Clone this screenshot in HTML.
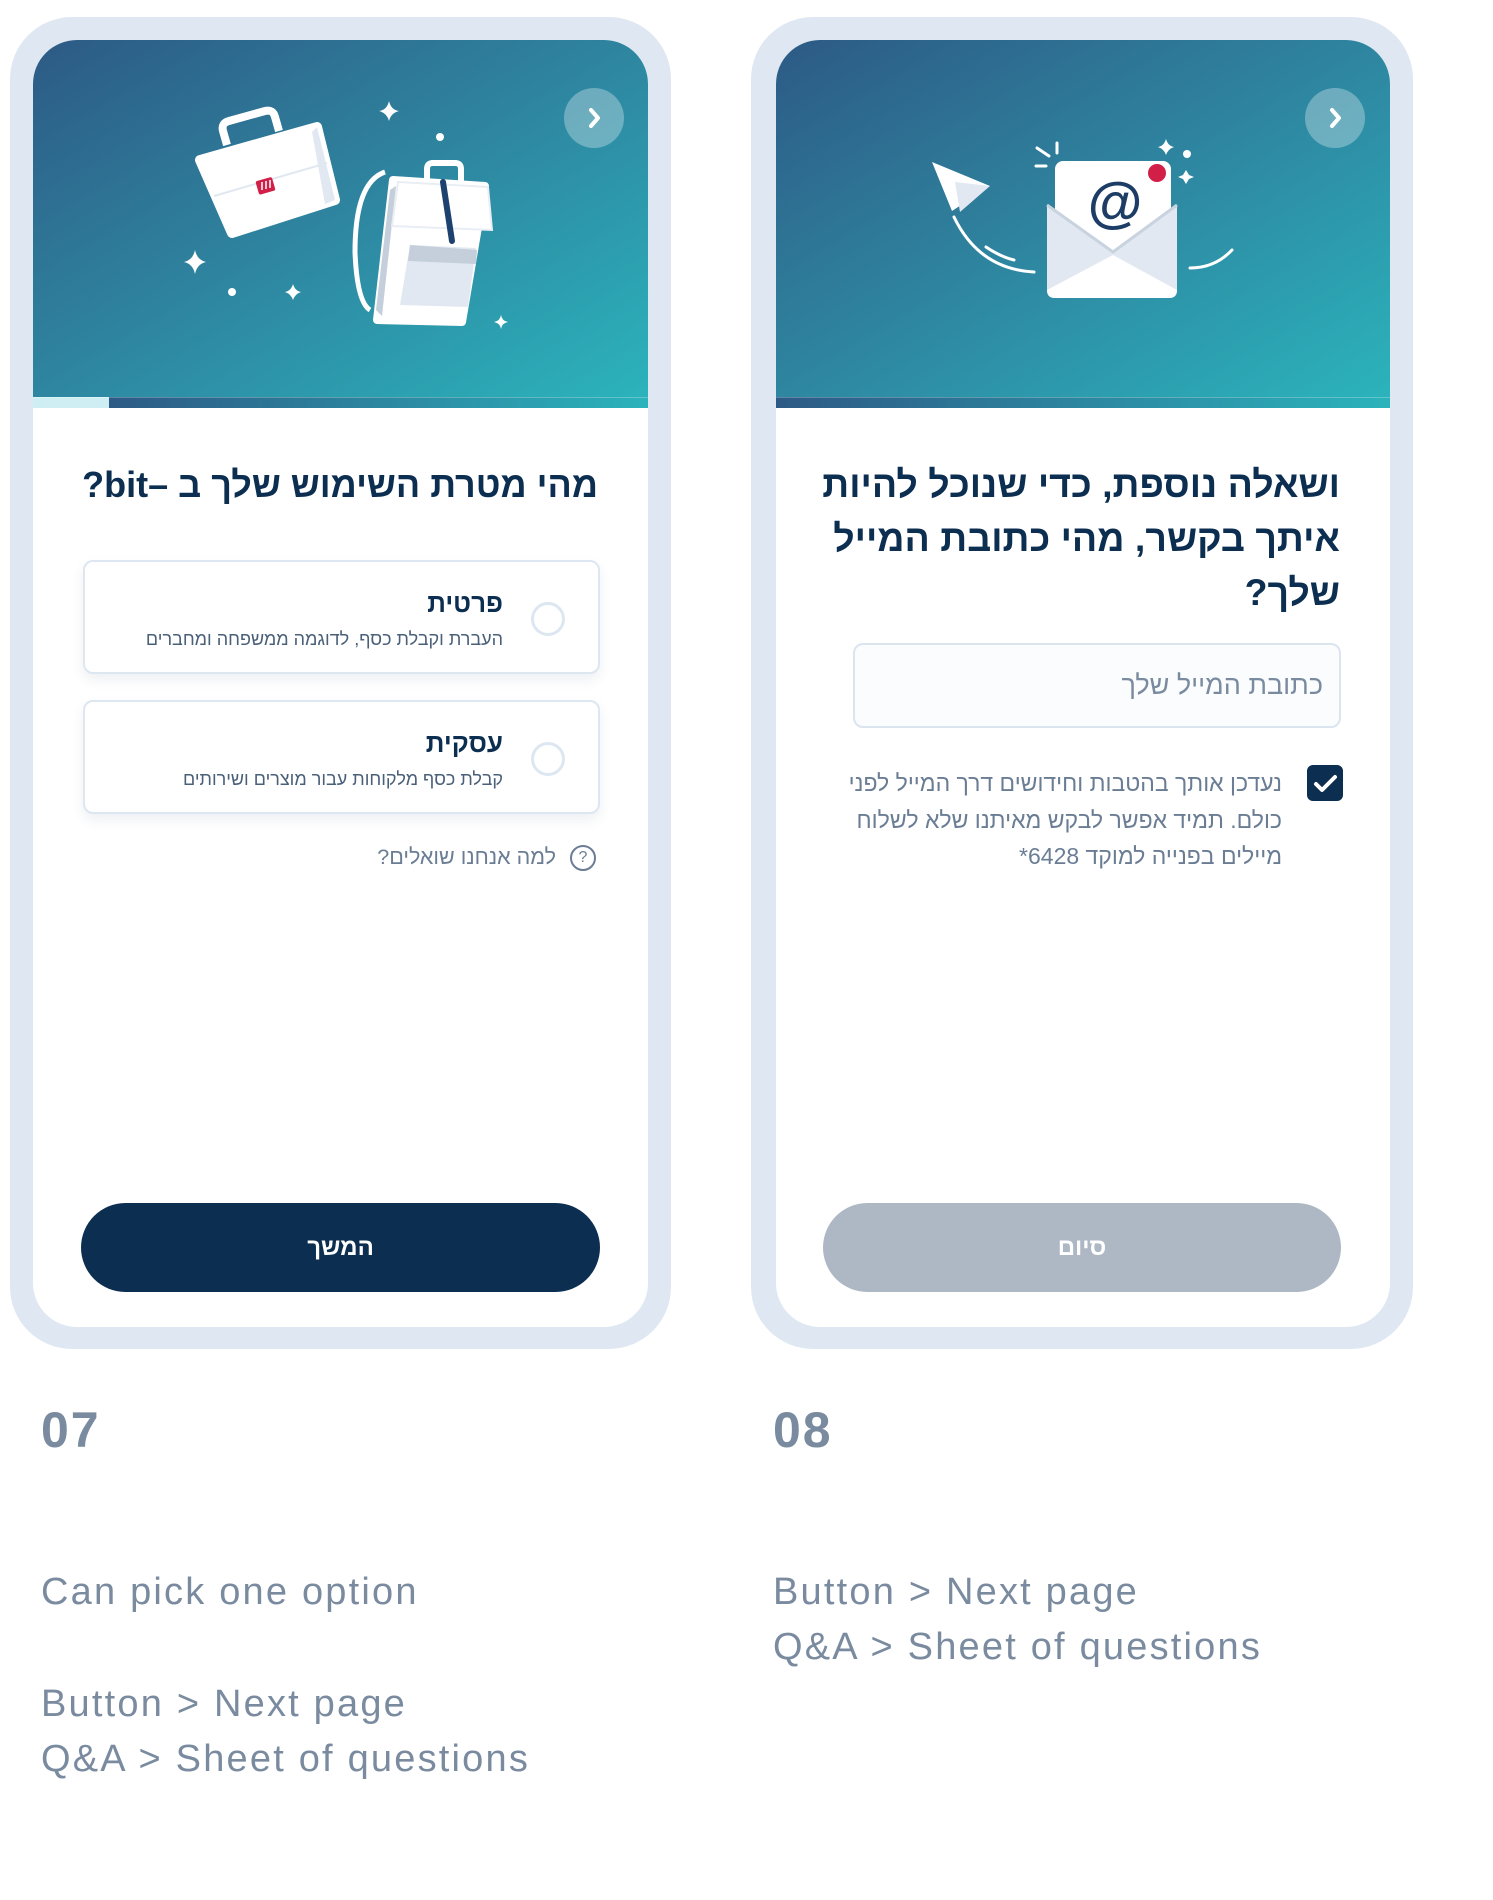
<!DOCTYPE html>
<html><head><meta charset="utf-8"><style>
*{margin:0;padding:0;box-sizing:border-box}
body{width:1493px;height:1900px;background:#fff;position:relative;overflow:hidden;font-family:"Liberation Sans","Noto Sans CJK SC",sans-serif}
.outer{position:absolute;background:#dfe8f2;border-radius:62px}
.inner{position:absolute;background:#fff;border-radius:44px;overflow:hidden}
.hdr{position:absolute;left:0;top:0;width:100%;height:357px;background:linear-gradient(150deg,#2d5a85 0%,#2e8aa3 55%,#2bb3bb 100%)}
.bar{position:absolute;left:0;top:357px;width:100%;height:11px;background:linear-gradient(90deg,#2d5a85,#2bb3bb);border-top:1px solid rgba(255,255,255,.25)}
.chev{position:absolute;width:60px;height:60px;border-radius:50%;background:rgba(255,255,255,.3);top:48px}
.t{position:absolute;direction:rtl;text-align:right;color:#0c2e50;font-weight:bold}
.opt{position:absolute;border:2px solid #dde7f1;border-radius:10px;background:#fff;box-shadow:0 6px 12px rgba(30,60,100,.08)}
.radio{position:absolute;width:34px;height:34px;border-radius:50%;border:3px solid #dde7f1}
.btn{position:absolute;border-radius:46px;color:#fff;font-weight:bold;font-size:24px;text-align:center;line-height:89px}
.note{position:absolute;color:#7a8ba0;font-size:38px;letter-spacing:2.2px;line-height:55px;font-family:"Liberation Sans",sans-serif;white-space:nowrap}
.num{position:absolute;color:#7a8ba0;font-size:50px;letter-spacing:2px;font-weight:bold;line-height:56px}
svg{position:absolute;left:0;top:0}
</style></head><body>

<div class="outer" style="left:10px;top:17px;width:661px;height:1332px"></div>
<div class="inner" style="left:33px;top:40px;width:615px;height:1287px">
 <div class="hdr"></div>
 <div class="bar" style="background:linear-gradient(90deg,#cfeef4 0,#cfeef4 76px,#2d5a85 76px,#2bb3bb 100%)"></div>
 <div class="chev" style="left:531px"></div>
</div>

<div class="outer" style="left:751px;top:17px;width:662px;height:1332px"></div>
<div class="inner" style="left:776px;top:40px;width:614px;height:1287px">
 <div class="hdr"></div>
 <div class="bar"></div>
 <div class="chev" style="left:529px"></div>
</div>

<svg width="1493" height="1900" viewBox="0 0 1493 1900">
 <g fill="none" stroke="#fff" stroke-width="4" stroke-linecap="round" stroke-linejoin="round">
  <path d="M591 110 l7 8 -7 8"/><path d="M1332 110 l7 8 -7 8"/>
 </g>
 <path d="M227 145 l-4 -14 q-2 -8 6 -10 l36 -10 q8 -2 10 6 l4 14" fill="none" stroke="#fff" stroke-width="8"/>
 <polygon points="200,160 317,127 335,200 232,233" fill="#fff" stroke="#fff" stroke-width="10" stroke-linejoin="round"/>
 <polygon points="312,132 317,127 335,200 325,204" fill="#e1e8f1"/>
 <path d="M214 196 L327 163" stroke="#e1e8f1" stroke-width="2"/>
 <rect x="257" y="179" width="17" height="14" rx="2" fill="#d11f47" transform="rotate(-16 265 186)"/>
 <path d="M262 182v8M266 181v8M270 180v8" stroke="#fff" stroke-width="1.5"/>
 <path d="M385 172 q-30 10 -30 80 q2 50 15 58" fill="none" stroke="#fff" stroke-width="5"/>
 <path d="M427 183 v-14 q0 -6 6 -6 h22 q6 0 6 6 v14" fill="none" stroke="#fff" stroke-width="6"/>
 <polygon points="393,180 485,186 462,322 377,320" fill="#fff" stroke="#fff" stroke-width="8" stroke-linejoin="round"/>
 <polygon points="390,190 396,186 382,316 376,310" fill="#c4cfdb"/>
 <polygon points="398,182 488,187 492,230 392,226" fill="#fff" stroke="#e9eef4" stroke-width="2"/>
 <polygon points="410,245 476,248 468,307 400,305" fill="#e1e8f1"/>
 <polygon points="410,245 477,250 476,264 408,261" fill="#c4cfdb"/>
 <path d="M443 182 L452 241" stroke="#1d4270" stroke-width="6" stroke-linecap="round"/>
 <g fill="#fff">
  <path d="M389 101 q2 9 10 10 q-8 2 -10 10 q-2 -8 -10 -10 q8 -1 10 -10z"/>
  <path d="M195 250 q2 10 11 12 q-9 2 -11 12 q-2 -10 -11 -12 q9 -2 11 -12z"/>
  <path d="M293 284 q2 7 8 8 q-6 2 -8 8 q-2 -6 -8 -8 q6 -1 8 -8z"/>
  <path d="M501 315 q1 6 7 7 q-6 1 -7 7 q-1 -6 -7 -7 q6 -1 7 -7z"/>
  <circle cx="440" cy="137" r="4"/><circle cx="232" cy="292" r="4"/>
 </g>
 <rect x="1055" y="161" width="116" height="110" rx="8" fill="#fff"/>
 <circle cx="1157" cy="173" r="9" fill="#d11f47"/>
 <text x="1115" y="221" text-anchor="middle" font-family="Liberation Sans,sans-serif" font-weight="bold" font-size="56" fill="#1d3d66">@</text>
 <path d="M1047 205 L1113 252 L1177 205 V290 q0 8 -8 8 H1055 q-8 0 -8 -8z" fill="#e1e8f1"/>
 <path d="M1047 205 L1113 252 L1177 205" fill="none" stroke="#c8d3df" stroke-width="3"/>
 <path d="M1047 290 L1113 255 L1177 290 q0 8 -8 8 H1055 q-8 0 -8 -8z" fill="#fff"/>
 <g fill="#fff">
  <polygon points="932,162 990,186 952,211"/>
  <polygon points="955,182 990,186 960,212" fill="#e1e8f1"/>
  <path d="M1166 139 q2 7 8 8 q-6 2 -8 8 q-2 -6 -8 -8 q6 -1 8 -8z"/>
  <circle cx="1187" cy="154" r="4"/>
  <path d="M1186 170 l3 5 5 2 -5 2 -3 5 -3 -5 -5 -2 5 -2z"/>
 </g>
 <g fill="none" stroke="#fff" stroke-width="3" stroke-linecap="round">
  <path d="M954 217 q25 52 80 55"/><path d="M986 247 q15 10 28 13"/>
  <path d="M1190 268 q25 0 42 -18"/>
  <path d="M1037 148 l12 8 M1036 166 h10 M1057 143 v10"/>
 </g>
</svg>

<div class="t" style="left:50px;top:463px;width:548px;font-size:36px;line-height:44px;white-space:nowrap">מהי מטרת השימוש שלך ב –bit?</div>
<div class="opt" style="left:83px;top:560px;width:517px;height:114px">
 <div class="radio" style="left:446px;top:40px"></div>
 <div class="t" style="right:95px;top:26px;font-size:26px">פרטית</div>
 <div class="t" style="right:95px;top:67px;font-size:18px;font-weight:normal;color:#4a5f78;white-space:nowrap">העברת וקבלת כסף, לדוגמה ממשפחה ומחברים</div>
</div>
<div class="opt" style="left:83px;top:700px;width:517px;height:114px">
 <div class="radio" style="left:446px;top:40px"></div>
 <div class="t" style="right:95px;top:26px;font-size:26px">עסקית</div>
 <div class="t" style="right:95px;top:67px;font-size:18px;font-weight:normal;color:#4a5f78;white-space:nowrap">קבלת כסף מלקוחות עבור מוצרים ושירותים</div>
</div>
<div style="position:absolute;left:570px;top:845px;width:26px;height:26px;border-radius:50%;border:2px solid #6a7d94;color:#6a7d94;font-size:16px;text-align:center;line-height:22px">?</div>
<div class="t" style="right:937px;top:845px;font-size:21.5px;font-weight:normal;color:#6a7d94;white-space:nowrap">למה אנחנו שואלים?</div>
<div class="btn" style="left:81px;top:1203px;width:519px;height:89px;background:#0c2e50">המשך</div>

<div class="t" style="left:790px;top:457px;width:550px;font-size:37.5px;line-height:54px">ושאלה נוספת, כדי שנוכל להיות איתך בקשר, מהי כתובת המייל שלך?</div>
<div style="position:absolute;left:853px;top:643px;width:488px;height:85px;border:2px solid #dbe5ef;border-radius:10px;background:#fafcfe"></div>
<div class="t" style="right:170px;top:670px;font-size:27px;font-weight:normal;color:#7a8ba0">כתובת המייל שלך</div>
<div style="position:absolute;left:1307px;top:765px;width:36px;height:36px;border-radius:6px;background:#0c2e50"></div>
<svg width="1493" height="1900" viewBox="0 0 1493 1900" style="pointer-events:none"><path d="M1316 784 l6 6 13 -13" fill="none" stroke="#fff" stroke-width="4" stroke-linecap="round" stroke-linejoin="round"/></svg>
<div class="t" style="right:211px;top:765px;width:450px;font-size:23px;line-height:36.5px;font-weight:normal;color:#6a7d94">נעדכן אותך בהטבות וחידושים דרך המייל לפני כולם. תמיד אפשר לבקש מאיתנו שלא לשלוח מיילים בפנייה למוקד 6428*</div>
<div class="btn" style="left:823px;top:1203px;width:518px;height:89px;background:#adb8c4">סיום</div>

<div class="num" style="left:41px;top:1402px">07</div>
<div class="num" style="left:773px;top:1402px">08</div>
<div class="note" style="left:41px;top:1565px">Can pick one option</div>
<div class="note" style="left:41px;top:1677px">Button &gt; Next page<br>Q&amp;A &gt; Sheet of questions</div>
<div class="note" style="left:773px;top:1565px">Button &gt; Next page<br>Q&amp;A &gt; Sheet of questions</div>
</body></html>
